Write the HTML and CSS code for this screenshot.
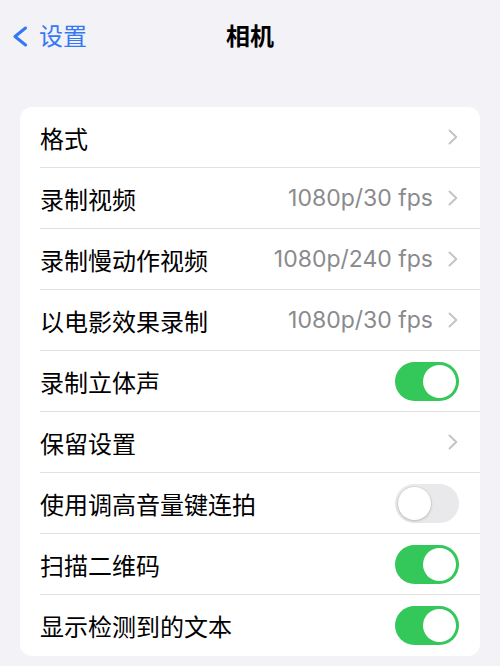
FILE: index.html
```html
<!DOCTYPE html>
<html lang="zh">

<head>
    <meta charset="UTF-8">
    <meta name="viewport" content="width=device-width, initial-scale=1.0">
    <title>相机</title>
    <link rel="stylesheet" href="styles.css">
</head>

<body>
    <div class="navBar">
        <a class="backLink" href="#">
            <svg class="backIcon" width="16" height="21" viewBox="0 0 16 21">
                <path d="M13.5 2 L3 10.5 L13.5 19" fill="none" stroke="#3478f6" stroke-width="3" stroke-linecap="round" stroke-linejoin="round"/>
            </svg>
            <span>设置</span>
        </a>
        <div class="navTitle">相机</div>
    </div>

    <div class="card">
        <div class="row">
            <div class="rowInner">
                <span class="label">格式</span>
                <span class="chevron"><svg width="10" height="16" viewBox="0 0 10 16"><path d="M1.5 1.5 L8.3 8 L1.5 14.5" fill="none" stroke="#c4c4c7" stroke-width="2" stroke-linecap="round" stroke-linejoin="round"/></svg></span>
            </div>
        </div>
        <div class="row">
            <div class="rowInner">
                <span class="label">录制视频</span>
                <span class="value">1080p/30 fps</span>
                <span class="chevron"><svg width="10" height="16" viewBox="0 0 10 16"><path d="M1.5 1.5 L8.3 8 L1.5 14.5" fill="none" stroke="#c4c4c7" stroke-width="2" stroke-linecap="round" stroke-linejoin="round"/></svg></span>
            </div>
        </div>
        <div class="row">
            <div class="rowInner">
                <span class="label">录制慢动作视频</span>
                <span class="value">1080p/240 fps</span>
                <span class="chevron"><svg width="10" height="16" viewBox="0 0 10 16"><path d="M1.5 1.5 L8.3 8 L1.5 14.5" fill="none" stroke="#c4c4c7" stroke-width="2" stroke-linecap="round" stroke-linejoin="round"/></svg></span>
            </div>
        </div>
        <div class="row">
            <div class="rowInner">
                <span class="label">以电影效果录制</span>
                <span class="value">1080p/30 fps</span>
                <span class="chevron"><svg width="10" height="16" viewBox="0 0 10 16"><path d="M1.5 1.5 L8.3 8 L1.5 14.5" fill="none" stroke="#c4c4c7" stroke-width="2" stroke-linecap="round" stroke-linejoin="round"/></svg></span>
            </div>
        </div>
        <div class="row">
            <div class="rowInner">
                <span class="label">录制立体声</span>
                <span class="toggle on"><span class="knob"></span></span>
            </div>
        </div>
        <div class="row">
            <div class="rowInner">
                <span class="label">保留设置</span>
                <span class="chevron"><svg width="10" height="16" viewBox="0 0 10 16"><path d="M1.5 1.5 L8.3 8 L1.5 14.5" fill="none" stroke="#c4c4c7" stroke-width="2" stroke-linecap="round" stroke-linejoin="round"/></svg></span>
            </div>
        </div>
        <div class="row">
            <div class="rowInner">
                <span class="label">使用调高音量键连拍</span>
                <span class="toggle"><span class="knob"></span></span>
            </div>
        </div>
        <div class="row">
            <div class="rowInner">
                <span class="label">扫描二维码</span>
                <span class="toggle on"><span class="knob"></span></span>
            </div>
        </div>
        <div class="row">
            <div class="rowInner">
                <span class="label">显示检测到的文本</span>
                <span class="toggle on"><span class="knob"></span></span>
            </div>
        </div>
    </div>
</body>

</html>
```

FILE: styles.css
```css
body {
    font-family: Inter, "Noto Sans CJK SC", sans-serif;
    background-color: #f2f2f7;
    margin: 0;
    padding: 0;
    overflow: hidden;
    color: #000;
}

.navBar {
    height: 68px;
    display: flex;
    align-items: center;
    justify-content: center;
    position: relative;
}

.backLink {
    position: absolute;
    left: 12px;
    top: 2px;
    height: 68px;
    display: flex;
    align-items: center;
    gap: 11px;
    color: #3478f6;
    text-decoration: none;
    font-size: 24px;
}

.backLink span {
    margin-top: -4px;
}

.navTitle {
    font-size: 24px;
    font-weight: bold;
}

.card {
    margin: 39px 20px 0;
    background-color: #fff;
    border-radius: 12px;
    overflow: hidden;
}

.row {
    padding-left: 20px;
}

.rowInner {
    height: 61px;
    box-sizing: border-box;
    display: flex;
    align-items: center;
    padding-right: 21px;
    border-bottom: 1px solid #e1e1e4;
}

.row:last-child .rowInner {
    border-bottom: none;
}

.label {
    flex: 1;
    font-size: 24px;
}

.value {
    font-size: 23px;
    color: #8a8a8e;
    margin-right: 15px;
}

.chevron {
    display: flex;
    margin-right: 1px;
}

.toggle {
    width: 64px;
    height: 39px;
    border-radius: 20px;
    background-color: #e9e9eb;
    position: relative;
}

.toggle.on {
    background-color: #34c759;
}

.knob {
    position: absolute;
    top: 3px;
    left: 3px;
    width: 33px;
    height: 33px;
    border-radius: 50%;
    background-color: #fff;
    box-shadow: 0 1px 3px rgba(0, 0, 0, 0.18), 0 0 0 1px rgba(0, 0, 0, 0.04);
}

.toggle.on .knob {
    left: 28px;
    box-shadow: none;
}
```
